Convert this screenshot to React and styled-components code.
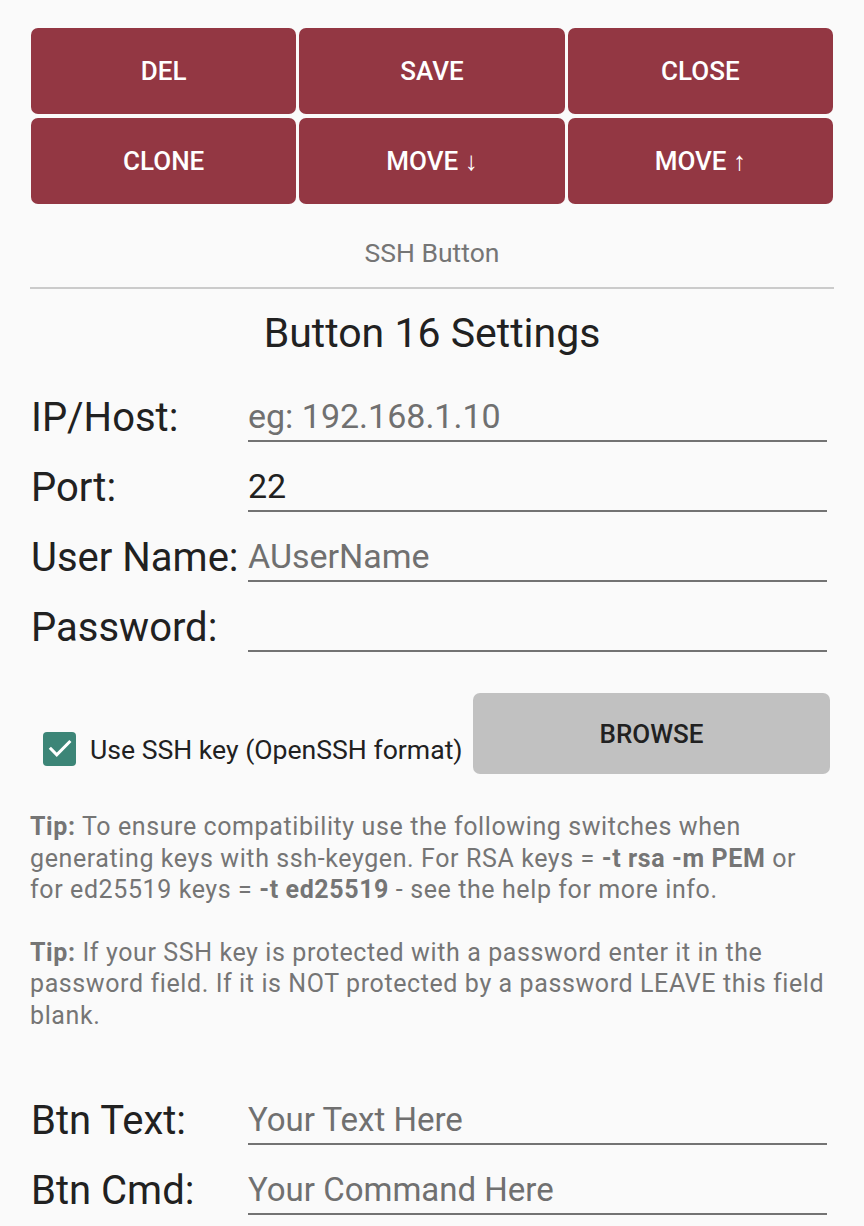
import React from 'react';
import styled, { createGlobalStyle } from 'styled-components';

// ==============================
// ===========  STYLES  =========
// ==============================

const GlobalStyle = createGlobalStyle`
  body {
    margin: 0;
    background: #fafafa;
    font-family: Roboto, "Noto Sans", sans-serif;
    color: #212121;
  }
  * {
    box-sizing: border-box;
  }
`;

const Page = styled.div`
  padding: 28px 30px 0 30px;
`;

const ActionGrid = styled.div`
  display: grid;
  grid-template-columns: repeat(3, 1fr);
  gap: 4px 3px;
  padding: 0 1px;
`;

const ActionButton = styled.button`
  height: 86px;
  border: none;
  border-radius: 7px;
  background: #933743;
  color: #fff;
  font-family: Roboto, sans-serif;
  font-size: 26px;
  font-weight: 500;
  text-transform: uppercase;
  cursor: pointer;
`;

const Subtitle = styled.div`
  margin-top: 34px;
  text-align: center;
  font-size: 26.5px;
  line-height: 30px;
  color: #757575;
`;

const Divider = styled.hr`
  margin: 19px 0 0 0;
  border: none;
  height: 2px;
  background: #cbcbcb;
`;

const Heading = styled.h2`
  margin: 21px 0 0 0;
  text-align: center;
  font-size: 41px;
  line-height: 46px;
  font-weight: 400;
  color: #212121;
`;

const Fields = styled.div`
  margin-top: ${props => props.top || 16}px;
  padding-left: 1px;
`;

const FieldRow = styled.label`
  display: grid;
  grid-template-columns: 217px 1fr;
  align-items: end;
  height: 70px;
`;

const FieldLabel = styled.span`
  font-size: 40px;
  line-height: 48px;
  color: #212121;
  white-space: nowrap;
`;

const TextInput = styled.input`
  display: block;
  width: calc(100% - 7px);
  height: 46px;
  padding: 0 0 4px 0;
  margin: 0;
  border: none;
  border-bottom: 2px solid #737373;
  background: transparent;
  font-family: Roboto, sans-serif;
  font-size: ${props => props.size || 34}px;
  line-height: 40px;
  color: #212121;
  outline: none;

  &::placeholder {
    color: #707070;
  }
`;

const KeyRow = styled.div`
  margin-top: 41px;
  display: flex;
  align-items: flex-end;
  justify-content: space-between;
  padding-right: 4px;
`;

const CheckGroup = styled.label`
  display: flex;
  align-items: center;
  gap: 14px;
  margin: 0 0 8px 13px;
  font-size: 26.6px;
  color: #212121;
  white-space: nowrap;
`;

const CheckBox = styled.span`
  display: flex;
  align-items: center;
  justify-content: center;
  width: 33px;
  height: 34px;
  border-radius: 4px;
  background: #3c8577;
`;

const BrowseButton = styled.button`
  width: 357px;
  height: 81px;
  border: none;
  border-radius: 7px;
  background: #c1c1c1;
  color: #212121;
  font-family: Roboto, sans-serif;
  font-size: 26px;
  font-weight: 500;
  cursor: pointer;
`;

const Tip = styled.p`
  margin: ${props => (props.first ? '37px' : '31px')} 0 0 0;
  font-size: 25px;
  line-height: 31.5px;
  letter-spacing: 0.6px;
  color: #757575;
  white-space: nowrap;

  b {
    font-weight: 700;
  }
`;

// =================================
// ===========  COMPONENT  =========
// =================================

const actions = ['Del', 'Save', 'Close', 'Clone', 'Move ↓', 'Move ↑'];

function App() {
  return (
    <Page>
      <GlobalStyle />
      <ActionGrid>
        {actions.map(a => (
          <ActionButton key={a}>{a}</ActionButton>
        ))}
      </ActionGrid>

      <Subtitle>SSH Button</Subtitle>
      <Divider />
      <Heading>Button 16 Settings</Heading>

      <Fields>
        <FieldRow>
          <FieldLabel>IP/Host:</FieldLabel>
          <TextInput placeholder="eg: 192.168.1.10" />
        </FieldRow>
        <FieldRow>
          <FieldLabel>Port:</FieldLabel>
          <TextInput defaultValue="22" />
        </FieldRow>
        <FieldRow>
          <FieldLabel>User Name:</FieldLabel>
          <TextInput placeholder="AUserName" />
        </FieldRow>
        <FieldRow>
          <FieldLabel>Password:</FieldLabel>
          <TextInput type="password" />
        </FieldRow>
      </Fields>

      <KeyRow>
        <CheckGroup>
          <CheckBox>
            <svg width="26" height="26" viewBox="0 0 24 24" fill="none">
              <path
                d="M3.6 11.8 L9 17.3 L20.6 5.6"
                stroke="#fff"
                strokeWidth="2.8"
                strokeLinecap="square"
              />
            </svg>
          </CheckBox>
          Use SSH key (OpenSSH format)
        </CheckGroup>
        <BrowseButton>BROWSE</BrowseButton>
      </KeyRow>

      <Tip first>
        <b>Tip:</b> To ensure compatibility use the following switches when
        <br />
        generating keys with ssh-keygen. For RSA keys = <b>-t rsa -m PEM</b> or
        <br />
        for ed25519 keys = <b>-t ed25519</b> - see the help for more info.
      </Tip>
      <Tip>
        <b>Tip:</b> If your SSH key is protected with a password enter it in the
        <br />
        password field. If it is NOT protected by a password LEAVE this field
        <br />
        blank.
      </Tip>

      <Fields top={44}>
        <FieldRow>
          <FieldLabel>Btn Text:</FieldLabel>
          <TextInput size={33} placeholder="Your Text Here" />
        </FieldRow>
        <FieldRow>
          <FieldLabel>Btn Cmd:</FieldLabel>
          <TextInput size={33} placeholder="Your Command Here" />
        </FieldRow>
      </Fields>
    </Page>
  );
}

export default App;
